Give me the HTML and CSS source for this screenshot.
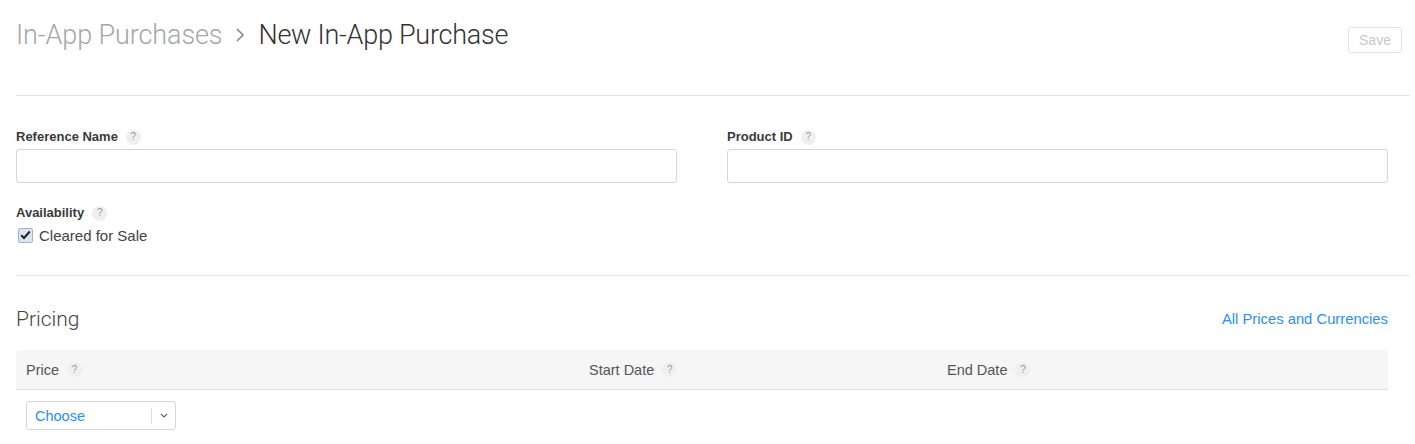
FILE: index.html
```html
<!DOCTYPE html>
<html>
<head>
<meta charset="utf-8">
<link rel="stylesheet" href="styles.css">
</head>
<body>
<div class="page">
  <header class="header">
    <div class="crumbs">
      <span class="crumb-parent">In-App Purchases</span>
      <svg class="crumb-sep" width="12" height="16" viewBox="0 0 12 16"><path d="M3 2 L9 8 L3 14" fill="none" stroke="#888" stroke-width="1.6"/></svg>
      <span class="crumb-current">New In-App Purchase</span>
    </div>
    <button class="save-btn">Save</button>
  </header>

  <section class="section details">
    <div class="fields">
      <div class="field">
        <div class="label">Reference Name <span class="help">?</span></div>
        <div class="input"></div>
      </div>
      <div class="field">
        <div class="label">Product ID <span class="help">?</span></div>
        <div class="input"></div>
      </div>
    </div>
    <div class="label avail">Availability <span class="help">?</span></div>
    <div class="check-row">
      <span class="checkbox"><svg width="11" height="10" viewBox="0 0 11 10"><path d="M1.2 5.2 L4 8 L9.8 1.5" fill="none" stroke="#222" stroke-width="2"/></svg></span>
      <span class="check-text">Cleared for Sale</span>
    </div>
  </section>

  <section class="section pricing">
    <div class="pricing-head">
      <h2 class="title">Pricing</h2>
      <a class="link">All Prices and Currencies</a>
    </div>
    <div class="table">
      <div class="thead">
        <div class="th">Price <span class="help">?</span></div>
        <div class="th">Start Date <span class="help">?</span></div>
        <div class="th">End Date <span class="help">?</span></div>
      </div>
      <div class="trow">
        <div class="select">
          <span class="select-text">Choose</span>
          <span class="select-arrow"><svg width="8" height="5" viewBox="0 0 8 5"><path d="M1 1 L4 4 L7 1" fill="none" stroke="#666" stroke-width="1.2"/></svg></span>
        </div>
      </div>
    </div>
  </section>
</div>
</body>
</html>
```

FILE: styles.css
```css
* { box-sizing: border-box; }
html, body { margin: 0; padding: 0; background: #fff; }
body {
  font-family: "Liberation Sans", Arial, sans-serif;
  color: #333;
  -webkit-font-smoothing: antialiased;
}
.page {
  padding: 0 5px 0 16px;
}
.header {
  height: 96px;
  display: flex;
  justify-content: space-between;
  align-items: flex-start;
  border-bottom: 1px solid #e3e3e3;
}
.crumbs {
  display: flex;
  align-items: center;
  margin-top: 18px;
  height: 34px;
  font-family: Roboto, "Liberation Sans", sans-serif;
  font-weight: 300;
  font-size: 27px;
  letter-spacing: -0.1px;
}
.crumb-parent { color: #a6a6a6; }
.crumb-sep { margin: 0 12px 0 12px; }
.crumb-current { color: #333; letter-spacing: -0.25px; }
.save-btn {
  margin-top: 27px;
  margin-right: 8px;
  width: 54px;
  height: 26px;
  border: 1px solid #e2e2e2;
  border-radius: 3px;
  background: #fff;
  color: #c8c8c8;
  font-family: "Liberation Sans", Arial, sans-serif;
  font-size: 14px;
  padding: 0;
}
.section {
  padding-right: 22px;
}
.details {
  padding-top: 33px;
  padding-bottom: 30px;
  border-bottom: 1px solid #e3e3e3;
}
.fields {
  display: grid;
  grid-template-columns: 1fr 1fr;
  column-gap: 50px;
}
.label {
  font-size: 13px;
  font-weight: bold;
  line-height: 16px;
  height: 16px;
  color: #3a3a3a;
  display: flex;
  align-items: center;
}
.help {
  display: inline-flex;
  align-items: center;
  justify-content: center;
  width: 15px;
  height: 15px;
  border-radius: 50%;
  background: #efefef;
  color: #9a9a9a;
  font-size: 10px;
  font-weight: normal;
  margin-left: 8px;
}
.input {
  margin-top: 4px;
  height: 34px;
  border: 1px solid #d6d6d6;
  border-radius: 3px;
  background: #fff;
}
.avail { margin-top: 22px; }
.check-row {
  margin-top: 4px;
  height: 20px;
  display: flex;
  align-items: center;
}
.checkbox {
  width: 15px;
  height: 15px;
  margin-left: 2px;
  border: 1px solid #a9b4c2;
  border-radius: 2px;
  background: #dbe4ef;
  display: inline-flex;
  align-items: center;
  justify-content: center;
}
.check-text {
  margin-left: 6px;
  font-size: 15px;
  color: #444;
}
.pricing {
  padding-top: 28px;
}
.pricing-head {
  display: flex;
  justify-content: space-between;
  align-items: center;
  height: 30px;
}
.title {
  margin: 0;
  font-family: Roboto, "Liberation Sans", sans-serif;
  font-weight: 300;
  font-size: 21px;
  color: #444;
}
.link {
  color: #2d8ff2;
  font-size: 14.8px;
}
.table { margin-top: 16px; }
.thead {
  height: 40px;
  background: #f6f6f6;
  border-bottom: 1px solid #e0e0e0;
  border-radius: 4px 4px 0 0;
  display: grid;
  grid-template-columns: 563px 358px 1fr;
  align-items: center;
}
.th {
  padding-left: 10px;
  font-size: 14.5px;
  color: #555;
  display: flex;
  align-items: center;
}
.th .help { margin-left: 8px; }
.trow {
  padding: 11px 0 0 10px;
}
.select {
  width: 150px;
  height: 29px;
  border: 1px solid #d6d6d6;
  border-radius: 3px;
  display: flex;
  align-items: center;
  background: #fff;
}
.select-text {
  flex: 1;
  padding-left: 8px;
  color: #2d8ff2;
  font-size: 14.5px;
}
.select-arrow {
  width: 24px;
  height: 16px;
  border-left: 1px solid #dedede;
  display: flex;
  align-items: center;
  justify-content: center;
}
```
